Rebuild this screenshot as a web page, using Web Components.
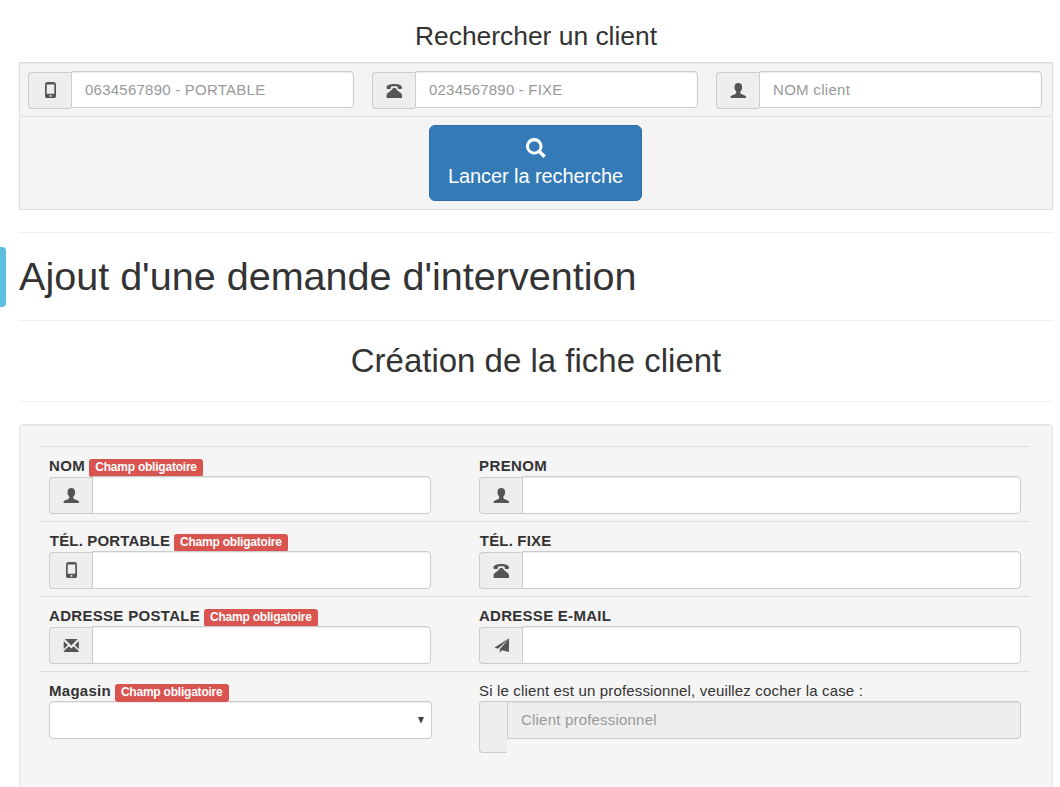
<!DOCTYPE html>
<html lang="fr">
<head>
<meta charset="utf-8">
<title>Demande d'intervention</title>
<style>
body{margin:0;background:#fff;color:#333;font:15px/21px "Liberation Sans",Arial,sans-serif;width:1060px;height:787px;overflow:hidden}
</style>
</head>
<body>
<intervention-page></intervention-page>
<script>
const define = (name, html, setup) => {
  const tpl = document.createElement('template');
  tpl.innerHTML = html;
  customElements.define(name, class extends HTMLElement {
    constructor() {
      super();
      this.attachShadow({mode: 'open'}).append(tpl.content.cloneNode(true));
    }
    connectedCallback() {
      if (setup) setup(this, this.shadowRoot);
    }
  });
};

const ICONS = {
  user: '<path d="M8.300 1c2.400 0 3.800 1.500 3.800 4 0 2.100-.7 3.600-1.700 4.600v1.300c0 .5.3.8.8 1l3.500 1.500c.9.400 1.300.8 1.300 1.600v1H.6v-1c0-.8.4-1.200 1.300-1.600l3.500-1.500c.5-.2.8-.5.8-1V9.600C5.200 8.600 4.500 7.100 4.500 5c0-2.500 1.400-4 3.800-4z"/>',
  mobile: '<path fill-rule="evenodd" d="M5.500 0h6c1.500.3 2.500 1 2.500 2.200v12c0 1.200-.7 1.800-1.800 1.800H4.800C3.700 16 3 15.400 3 14.200v-12C3 1 4 .3 5.500 0zM4.700 2.600v9.200h7.600V2.600zM7.600 13v1.700h1.800V13z"/>',
  phone: '<path d="M.9 7C.6 6.700.5 6.200.5 5.600.5 3.400 3.600 2 8.300 2S16 3.400 16 5.600c0 .6-.1 1.100-.4 1.400h-3.300c-.5-.3-.6-.9-.6-2.300-1.900-.5-4.900-.5-6.800 0 0 1.400-.1 2-.7 2.300z"/><path d="M7 6h2.600c.5 1.200 1.300 2 2.600 2.900 2.400 1.700 3.800 2.700 3.800 3.900V16H.6v-3.200c0-1.200 1.400-2.200 3.800-3.900C5.700 8 6.500 7.200 7 6z"/>',
  mail: '<path d="M1.800 2h13L8.300 8.400zM.7 3.900 4.800 8 .7 12.200zM15.900 3.900v8.300L11.800 8zM5.900 9.200 8.300 11.500l2.400-2.300 5 4.900v.9H.9v-.9z"/>',
  send: '<path d="M16.100 1.300 1.500 10.500l3.600 1.300zM16.100 1.300 6.700 12.300v3.400l2.100-2.500L15.900 15z"/>',
  search: '<path fill-rule="evenodd" d="M6.600 0a6.600 6.600 0 0 1 5.500 10.200L16 14l-2.100 2-3.800-3.800A6.600 6.600 0 1 1 6.600 0zm0 2.500a4.200 4.200 0 1 0 0 8.400 4.200 4.200 0 0 0 0-8.400z"/>'
};

define('glyph-icon', `<style>
:host{display:block;width:16px;height:16px}
svg{display:block;width:100%;height:100%;fill:currentColor;overflow:visible}
</style><svg viewBox="0 0 16 16" aria-hidden="true"></svg>`,
(el, root) => { root.querySelector('svg').innerHTML = ICONS[el.getAttribute('name')]; });

define('input-group', `<style>
:host{display:flex;align-items:flex-start;height:38px;--h:38px;letter-spacing:.2px}
:host([size=search]){--h:37px}
.addon{box-sizing:border-box;width:43px;height:37px;margin-top:1px;border:1px solid #ccc;border-right:0;border-radius:4px 0 0 4px;background:#eee;color:#555;padding:9px 0 0 13px;flex:none}
input{box-sizing:border-box;flex:1;min-width:0;height:var(--h);margin:0;border:1px solid #ccc;border-radius:0 4px 4px 0;background:#fff;box-shadow:inset 0 1px 1px rgba(0,0,0,.075);padding:0 13px;font:inherit;letter-spacing:inherit;color:#555;outline:0}
input::placeholder{color:#999;opacity:1}
input:disabled{background:#eee;padding-bottom:2px}
:host([check]) .addon{width:28px;height:52px;margin-top:0}
</style><span class="addon"></span><input type="text">`,
(el, root) => {
  const icon = el.getAttribute('icon'), input = root.querySelector('input');
  if (icon) root.querySelector('.addon').innerHTML = `<glyph-icon name="${icon}"></glyph-icon>`;
  input.placeholder = el.getAttribute('placeholder') || '';
  input.disabled = el.hasAttribute('disabled');
});

define('required-tag', `<style>
:host{display:block;box-sizing:border-box;width:114px;height:18px;margin:4px 0 -1px 4px;padding:0 6px;border-radius:3px;background:#d9534f;color:#fff;font:bold 12px/16px "Liberation Sans",Arial,sans-serif;letter-spacing:-.22px;white-space:nowrap}
</style>Champ obligatoire`);

define('form-field', `<style>
:host{display:block;min-width:0}
.label{display:flex;height:21px;font-weight:bold;white-space:nowrap}
:host([plain]) .label{font-weight:normal}
</style><div class="label"><slot name="label"></slot><slot name="tag"></slot></div><slot></slot>`);

define('form-row', `<style>
:host{display:grid;grid-template-columns:382px 542px;column-gap:48px;box-sizing:border-box;height:75px;padding:8px 9px 0;border-top:1px solid #ddd}
</style><slot></slot>`);

define('shop-select', `<style>
:host{display:flex;align-items:center;justify-content:flex-end;box-sizing:border-box;width:383px;height:38px;border:1px solid #ccc;border-radius:4px;background:#fff;box-shadow:inset 0 1px 1px rgba(0,0,0,.075);padding:0 7px 1px 0}
svg{display:block;fill:#444}
</style><svg width="6" height="6" viewBox="0 0 6 6"><path d="M0 0h6L3.400 6h-.8z"/></svg>`);

define('search-button', `<style>
:host{display:block}
button{display:flex;flex-direction:column;align-items:center;box-sizing:border-box;width:213px;height:76px;margin:0;padding:12px 0 0;border:1px solid #2e6da4;border-radius:6px;background:#337ab7;color:#fff;font:20px/26px "Liberation Sans",Arial,sans-serif;letter-spacing:-.08px;white-space:nowrap}
glyph-icon{width:20px;height:20px;margin-bottom:5px}
</style><button type="button"><glyph-icon name="search"></glyph-icon><span><slot></slot></span></button>`);

define('search-panel', `<style>
:host{display:block;box-sizing:border-box;width:1034px;height:148px;border:1px solid #ddd;background:#f4f4f4;box-shadow:inset 0 1px 1px rgba(0,0,0,.05)}
.fields{display:grid;grid-template-columns:repeat(3,326px);column-gap:18px;box-sizing:border-box;height:53px;padding:8px}
.action{display:flex;justify-content:center;border-top:1px solid #ddd;padding-top:8px;padding-right:1px}
</style><div class="fields"><slot></slot></div><div class="action"><slot name="action"></slot></div>`);

define('form-well', `<style>
:host{display:block;box-sizing:border-box;width:1034px;height:400px;padding:21px 22px 0 20px;border:1px solid #e3e3e3;border-radius:4px;background:#f5f5f5;box-shadow:inset 0 1px 1px rgba(0,0,0,.05)}
</style><slot></slot>`);

define('intervention-page', `<style>
:host{display:block;box-sizing:border-box;width:1060px;height:787px;overflow:hidden;padding:0 7px 0 19px;position:relative}
h1,h2,h3{margin:0;font-weight:normal;white-space:nowrap;box-sizing:border-box}
h3{height:62px;padding-top:22px;font-size:26.4px;line-height:29px;text-align:center}
h1{height:87px;padding-top:21px;font-size:39.55px;line-height:44px}
h2{height:80px;padding-top:22px;font-size:33px;line-height:36px;text-align:center}
hr{margin:0;border:0;height:1px;background:#eee}
.first{margin-top:22px}.last{margin-bottom:22px}
.tab{position:absolute;left:0;top:247px;width:6px;height:60px;border-radius:0 4px 4px 0;background:#5bc0de}
.l{letter-spacing:.27px}
.p{letter-spacing:.17px}
.s{letter-spacing:.31px}
.wide{letter-spacing:.4px}
.t{padding-left:.8px}
.note{letter-spacing:.16px}
</style>
<div class="tab"></div>
<h3>Rechercher un client</h3>
<search-panel>
  <input-group size="search" icon="mobile" placeholder="0634567890 - PORTABLE" style="letter-spacing:.24px"></input-group>
  <input-group size="search" icon="phone" placeholder="0234567890 - FIXE"></input-group>
  <input-group size="search" icon="user" placeholder="NOM client" style="letter-spacing:.3px"></input-group>
  <search-button slot="action">Lancer la recherche</search-button>
</search-panel>
<hr class="first">
<h1>Ajout d'une demande d'intervention</h1>
<hr>
<h2>Création de la fiche client</h2>
<hr class="last">
<form-well>
  <form-row>
    <form-field><span class="wide" slot="label">NOM</span><required-tag slot="tag"></required-tag><input-group icon="user"></input-group></form-field>
    <form-field><span class="wide" slot="label">PRENOM</span><input-group icon="user"></input-group></form-field>
  </form-row>
  <form-row>
    <form-field><span class="p t" slot="label">TÉL. PORTABLE</span><required-tag slot="tag"></required-tag><input-group icon="mobile"></input-group></form-field>
    <form-field><span class="p t" slot="label">TÉL. FIXE</span><input-group icon="phone"></input-group></form-field>
  </form-row>
  <form-row>
    <form-field><span class="s" slot="label">ADRESSE POSTALE</span><required-tag slot="tag"></required-tag><input-group icon="mail"></input-group></form-field>
    <form-field><span class="l" slot="label">ADRESSE E-MAIL</span><input-group icon="send"></input-group></form-field>
  </form-row>
  <form-row>
    <form-field><span class="l" slot="label">Magasin</span><required-tag slot="tag"></required-tag><shop-select></shop-select></form-field>
    <form-field plain><span class="note" slot="label">Si le client est un professionnel, veuillez cocher la case :</span><input-group check disabled placeholder="Client professionnel"></input-group></form-field>
  </form-row>
</form-well>`);
</script>
</body>
</html>
